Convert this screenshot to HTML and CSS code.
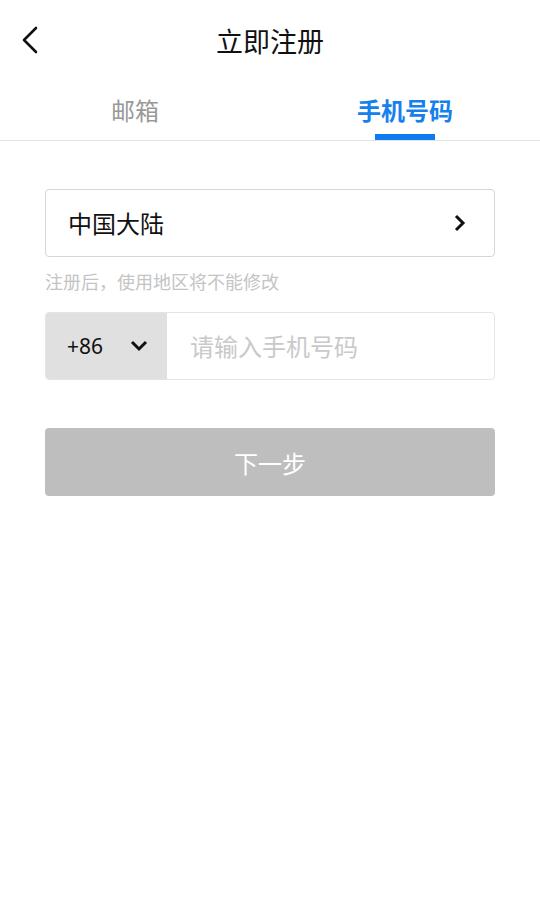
FILE: index.html
```html
<!DOCTYPE html>
<html lang="zh">
<head>
<meta charset="utf-8">
<link rel="stylesheet" href="styles.css">
</head>
<body>
<div class="page">
  <header class="topbar">
    <button class="back" aria-label="返回">
      <svg width="18" height="28" viewBox="0 0 18 28"><path d="M15 2 L3 14 L15 26" fill="none" stroke="#111" stroke-width="2.6" stroke-linecap="round" stroke-linejoin="round"/></svg>
    </button>
    <h1 class="title">立即注册</h1>
  </header>
  <nav class="tabs">
    <div class="tab">邮箱</div>
    <div class="tab active">手机号码</div>
  </nav>
  <main class="form">
    <div class="field country">
      <span class="country-name">中国大陆</span>
      <svg class="arrow-right" width="14" height="18" viewBox="0 0 14 18"><path d="M3 2 L10 9 L3 16" fill="none" stroke="#111" stroke-width="3" stroke-linejoin="miter"/></svg>
    </div>
    <p class="hint">注册后，使用地区将不能修改</p>
    <div class="field phone">
      <div class="code">
        <span>+86</span>
        <svg width="18" height="12" viewBox="0 0 18 12"><path d="M2 2 L9 9 L16 2" fill="none" stroke="#111" stroke-width="3"/></svg>
      </div>
      <div class="placeholder">请输入手机号码</div>
    </div>
    <button class="next">下一步</button>
  </main>
</div>
</body>
</html>
```

FILE: styles.css
```css
* { box-sizing: border-box; }
html, body { margin: 0; padding: 0; background: #fff; }
body {
  font-family: "Noto Sans CJK SC", "Noto Sans", sans-serif;
  color: #111;
}
.page { width: 540px; min-height: 924px; }
.topbar {
  height: 82px;
  display: flex;
  align-items: center;
  justify-content: center;
  position: relative;
}
.back {
  position: absolute;
  left: 21px;
  top: 26px;
  border: 0;
  background: none;
  padding: 0;
  width: 18px;
  height: 28px;
  display: block;
}
.back svg { display: block; }
.title {
  margin: 0;
  font-size: 27px;
  font-weight: 400;
  line-height: 1;
  position: relative;
  top: -1px;
}
.tabs {
  display: grid;
  grid-template-columns: 1fr 1fr;
  border-bottom: 1px solid #e2e2e2;
  height: 59px;
}
.tab {
  font-size: 24px;
  color: #999;
  text-align: center;
  line-height: 1;
  padding-top: 16px;
  position: relative;
}
.tab.active {
  color: #1680ec;
  font-weight: 700;
}
.tab.active::after {
  content: "";
  position: absolute;
  left: 50%;
  margin-left: -30px;
  width: 60px;
  height: 6px;
  bottom: 0;
  background: #0d7cf2;
}
.form {
  padding: 48px 45px 0;
}
.field {
  height: 68px;
  border: 1px solid #d6d6d6;
  border-radius: 4px;
  display: flex;
  align-items: center;
}
.country {
  justify-content: space-between;
  padding: 0 27px 0 22px;
}
.country-name { font-size: 24px; line-height: 1; }
.arrow-right { display: block; }
.hint {
  margin: 0;
  font-size: 18px;
  line-height: 1;
  color: #c4c4c4;
  padding: 15px 0 0;
  height: 55px;
}
.phone {
  border-color: #e4e4e4;
  overflow: hidden;
}
.code {
  width: 121px;
  height: 100%;
  background: #e0e0e0;
  display: flex;
  align-items: center;
  justify-content: space-between;
  padding: 0 19px 0 21px;
  font-family: "Noto Sans", sans-serif;
  font-size: 21px;
}
.code svg { display: block; }
.placeholder {
  font-size: 24px;
  color: #c9c9c9;
  padding-left: 23px;
  line-height: 1;
}
.next {
  display: block;
  width: 100%;
  margin-top: 48px;
  height: 68px;
  border: 0;
  border-radius: 4px;
  background: #bebebe;
  color: #fff;
  font-family: "Noto Sans CJK SC", sans-serif;
  font-size: 24px;
}
```
